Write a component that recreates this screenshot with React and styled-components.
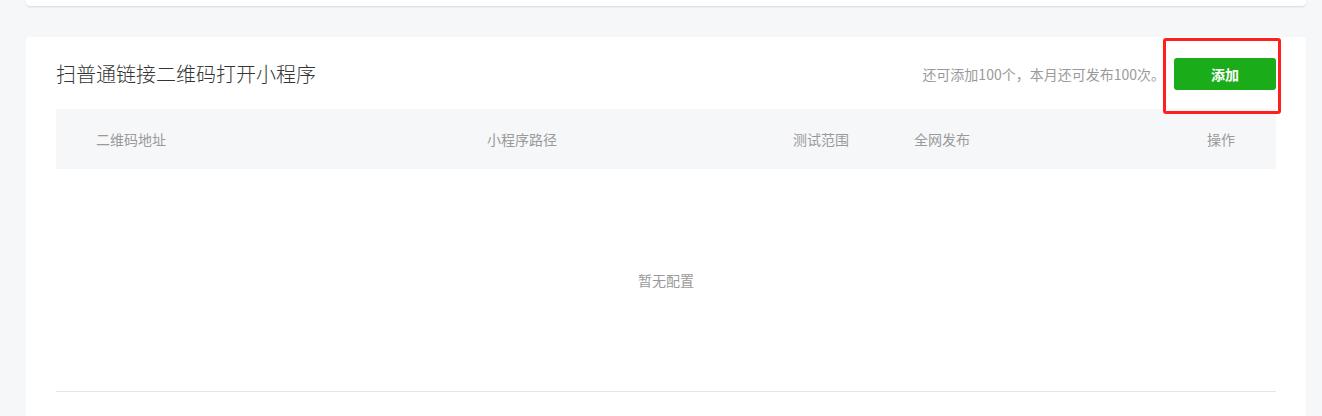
import React from "react";
import styled, { createGlobalStyle } from "styled-components";

const GlobalStyle = createGlobalStyle`
  html, body {
    margin: 0;
    padding: 0;
    background: #f6f7f9;
    font-family: "Noto Sans CJK SC", "Noto Sans", sans-serif;
  }
`;

const columns = [
  { key: "url", label: "二维码地址" },
  { key: "path", label: "小程序路径" },
  { key: "range", label: "测试范围" },
  { key: "publish", label: "全网发布" },
  { key: "action", label: "操作", right: true },
];

const Page = styled.div`
  padding: 0 16px 40px 26px;
  overflow: hidden;
`;

const TopCard = styled.div`
  height: 6px;
  background: #fff;
  border-radius: 0 0 4px 4px;
  box-shadow: 0 1px 2px rgba(0, 0, 0, 0.12);
  margin-bottom: 31px;
`;

const Card = styled.section`
  position: relative;
  background: #fff;
  border-radius: 4px 4px 0 0;
  padding: 0 30px 60px 30px;
`;

const Header = styled.div`
  display: flex;
  align-items: center;
  padding: 21px 0 19px;
`;

const Title = styled.h2`
  flex: 1;
  margin: 0;
  font-size: 20px;
  font-weight: 300;
  color: #353535;
  line-height: 32px;
`;

const Quota = styled.span`
  font-size: 14px;
  color: #9a9a9a;
  margin-right: 9px;
`;

const AddButton = styled.button`
  width: 102px;
  height: 32px;
  border: none;
  border-radius: 3px;
  background: #1aad19;
  color: #fff;
  font-family: inherit;
  font-size: 14px;
  font-weight: bold;
  cursor: pointer;
`;

const Highlight = styled.div`
  position: absolute;
  left: 1137px;
  top: 1px;
  width: 112px;
  height: 70px;
  border: 3px solid #ff1f1f;
  border-radius: 3px;
  pointer-events: none;
`;

const Table = styled.div`
  border-bottom: 1px solid #e5e5e5;
`;

const HeadRow = styled.div`
  display: grid;
  grid-template-columns: 391px 306px 121px 1fr 160px;
  height: 60px;
  align-items: center;
  background: #f6f7f9;
`;

const HeadCell = styled.div`
  padding: ${(p) => (p.$right ? "0 41px 0 0" : "0 0 0 40px")};
  text-align: ${(p) => (p.$right ? "right" : "left")};
  font-size: 14px;
  color: #9a9a9a;
`;

const Empty = styled.div`
  height: 222px;
  display: flex;
  align-items: center;
  justify-content: center;
  font-size: 14px;
  color: #9a9a9a;
`;

export default function App() {
  return (
    <>
      <GlobalStyle />
      <Page>
        <TopCard />
        <Card>
          <Header>
            <Title>扫普通链接二维码打开小程序</Title>
            <Quota>还可添加100个，本月还可发布100次。</Quota>
            <AddButton>添加</AddButton>
          </Header>
          <Highlight />
          <Table>
            <HeadRow>
              {columns.map((c) => (
                <HeadCell key={c.key} $right={c.right}>
                  {c.label}
                </HeadCell>
              ))}
            </HeadRow>
            <Empty>暂无配置</Empty>
          </Table>
        </Card>
      </Page>
    </>
  );
}
